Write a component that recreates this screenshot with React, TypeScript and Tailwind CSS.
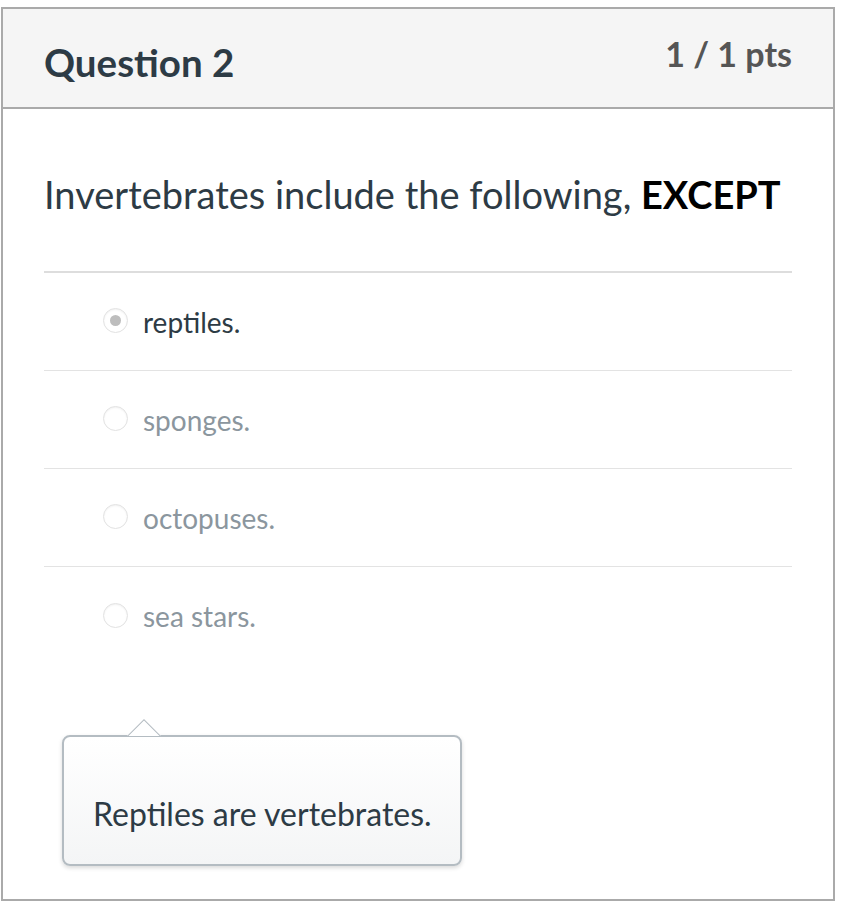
export default function App() {
  const answers = [
    { id: 1, text: "reptiles.", selected: true },
    { id: 2, text: "sponges.", selected: false },
    { id: 3, text: "octopuses.", selected: false },
    { id: 4, text: "sea stars.", selected: false },
  ];

  return (
    <div
      className="w-[848px] h-[906px] bg-white pt-[7px] pl-[1px]"
      style={{ fontFamily: "Lato, 'Open Sans', sans-serif" }}
    >
      <div className="w-[834px] h-[894px] border-2 border-[#aaaaaa] flex flex-col overflow-hidden">
        {/* Header */}
        <div className="h-[100px] shrink-0 bg-[#f5f5f5] border-b-2 border-[#aaaaaa] flex justify-between px-[41px]">
          <h2 className="text-[38.5px] font-bold text-[#2d3b45] pt-[34px] leading-none">
            Question 2
          </h2>
          <div className="text-[34px] font-bold text-[#555555] pt-[28px] leading-none">
            1 / 1 pts
          </div>
        </div>

        {/* Body */}
        <div className="px-[41px] shrink-0">
          <p className="text-[38px] text-[#2d3b45] pt-[61px] pb-[53px] leading-[48px]">
            Invertebrates include the following,{" "}
            <strong className="font-bold text-black">EXCEPT</strong>
          </p>
          <div className="border-t-2 border-[#dddddd]">
            {answers.map((a, i) => (
              <div
                key={a.id}
                className={`h-[98px] flex items-center pl-[59px] ${i < answers.length - 1 ? "border-b border-[#e3e3e3]" : ""}`}
              >
                <span className="w-[25px] h-[25px] rounded-full border border-[#e2e2e2] bg-white shadow-[inset_0_1px_2px_rgba(0,0,0,0.06)] flex items-center justify-center mr-[15px] -mt-[2px]">
                  {a.selected && (
                    <span className="w-[11px] h-[11px] rounded-full bg-[#bdbdbd]" />
                  )}
                </span>
                <span
                  className={`text-[28px] leading-none ${a.selected ? "text-[#2d3b45]" : "text-[#8b969e]"}`}
                >
                  {a.text}
                </span>
              </div>
            ))}
          </div>

          {/* Feedback bubble */}
          <div className="relative mt-[70px] ml-[18px] w-[400px]">
            <div className="absolute -top-[17px] left-[65px] w-[34px] h-[18px] overflow-hidden z-10">
              <div className="w-[24px] h-[24px] bg-white border border-[#b4bcc2] rotate-45 translate-x-[5px] translate-y-[6px]" />
            </div>
            <div className="h-[131px] rounded-[8px] border-2 border-[#b4bcc2] bg-gradient-to-b from-white to-[#f4f5f6] shadow-[0_2px_4px_rgba(0,0,0,0.15)] flex items-center pl-[29px] pt-[26px]">
              <span className="text-[32px] text-[#2d3b45]">Reptiles are vertebrates.</span>
            </div>
          </div>
        </div>
      </div>
    </div>
  );
}
